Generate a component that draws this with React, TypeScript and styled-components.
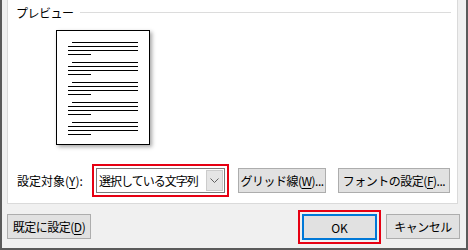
import styled, { createGlobalStyle } from 'styled-components';

const GlobalStyle = createGlobalStyle`
  html, body {
    margin: 0;
    padding: 0;
    background: #f0f0f0;
  }
  * {
    box-sizing: border-box;
  }
`

const paragraphs = [0, 1, 2, 3, 4];

export default function App() {
  return (
    <>
      <GlobalStyle />
      <Dialog>
        <Panel>
          <Heading>
            <HeadingText>プレビュー</HeadingText>
            <HeadingRule />
          </Heading>
          <Page>
            {paragraphs.map((p) => (
              <Paragraph key={p}>
                <TextLine $indent />
                <TextLine />
                <TextLine />
                <TextLine $short />
              </Paragraph>
            ))}
          </Page>
          <OptionsRow>
            <Label>設定対象(<U>Y</U>):</Label>
            <Highlight>
              <Combo>
                <ComboText>選択している文字列</ComboText>
                <ComboArrow>
                  <svg width="9" height="5" viewBox="0 0 9 5">
                    <polyline points="0.5,0.5 4.5,4.5 8.5,0.5" fill="none" stroke="#606060" strokeWidth="1" />
                  </svg>
                </ComboArrow>
              </Combo>
            </Highlight>
            <Button $width={88} $mLeft={9}>グリッド線(<U>W</U>)...</Button>
            <Button $width={112} $mLeft={12}>フォントの設定(<U>F</U>)...</Button>
          </OptionsRow>
        </Panel>
        <Footer>
          <Button $width={84} $mTop={4}>既定に設定(<U>D</U>)</Button>
          <Highlight $push>
            <DefaultButton>OK</DefaultButton>
          </Highlight>
          <Button $width={74} $mTop={4} $mLeft={5}>キャンセル</Button>
        </Footer>
      </Dialog>
    </>
  );
}

const Dialog = styled.div`
  width: 468px;
  height: 250px;
  background: #f0f0f0;
  border-left: 2px solid #5a5a5a;
  border-right: 2px solid #5a5a5a;
  border-bottom: 2px solid #5a5a5a;
  padding: 0 6px 0 5px;
  display: flex;
  flex-direction: column;
  font-family: "Noto Sans CJK JP", "Noto Sans", sans-serif;
  font-size: 12px;
  color: #000;
`

const Panel = styled.div`
  width: 451px;
  height: 204px;
  background: #fff;
  border: 1px solid #dadada;
  border-top: none;
  display: flex;
  flex-direction: column;
  padding: 5px 6px 0 8px;
`

const Heading = styled.div`
  display: flex;
  align-items: center;
  height: 16px;
`

const HeadingText = styled.span`
  line-height: 16px;
  letter-spacing: -0.5px;
`

const HeadingRule = styled.div`
  flex: 1;
  height: 1px;
  background: #dcdcdc;
  margin-left: 6px;
  margin-top: -2px;
`

const Page = styled.div`
  width: 94px;
  height: 115px;
  margin: 9px 0 0 40px;
  border: 1px solid #000;
  background: #fff;
  box-shadow: 2px 2px 4px rgba(0, 0, 0, 0.35);
  padding: 11px 11px 0 11px;
  display: flex;
  flex-direction: column;
  gap: 7px;
`

const Paragraph = styled.div`
  display: flex;
  flex-direction: column;
  gap: 3px;
`

const TextLine = styled.div<{ $indent?: boolean; $short?: boolean }>`
  height: 1px;
  background: #000;
  margin-left: ${(p) => (p.$indent ? '4px' : '0')};
  width: ${(p) => (p.$short ? '23px' : 'auto')};
`

const OptionsRow = styled.div`
  display: flex;
  align-items: center;
  margin-top: 19px;
`

const Label = styled.span`
  margin-left: 1px;
  width: 75px;
  white-space: nowrap;
`

const U = styled.span`
  text-decoration: underline;
  text-underline-offset: 2px;
`

const Highlight = styled.div<{ $push?: boolean }>`
  border: 2px solid #e60012;
  padding: 2px;
  display: flex;
  margin-left: ${(p) => (p.$push ? 'auto' : '0')};
`

const Combo = styled.div`
  width: 129px;
  height: 25px;
  border: 1px solid #7a7a7a;
  background: #fff;
  display: flex;
  align-items: stretch;
`

const ComboText = styled.span`
  flex: 1;
  padding-left: 2px;
  line-height: 23px;
  font-size: 12px;
  letter-spacing: -1px;
  white-space: nowrap;
  overflow: hidden;
`

const ComboArrow = styled.div`
  width: 17px;
  margin: 1px;
  background: #e5e5e5;
  border: 1px solid #cccccc;
  display: flex;
  align-items: center;
  justify-content: center;
`

const Button = styled.div<{ $width: number; $mLeft?: number; $mTop?: number }>`
  width: ${(p) => p.$width}px;
  height: 25px;
  margin-left: ${(p) => p.$mLeft ?? 0}px;
  margin-top: ${(p) => p.$mTop ?? 0}px;
  background: #e1e1e1;
  border: 1px solid #adadad;
  display: flex;
  align-items: center;
  justify-content: center;
  white-space: nowrap;
  letter-spacing: -0.5px;
`

const DefaultButton = styled.div`
  width: 75px;
  height: 26px;
  background: #e1e1e1;
  border: 2px solid #0078d7;
  display: flex;
  align-items: center;
  justify-content: center;
`

const Footer = styled.div`
  display: flex;
  align-items: flex-start;
  padding-top: 6px;
`
